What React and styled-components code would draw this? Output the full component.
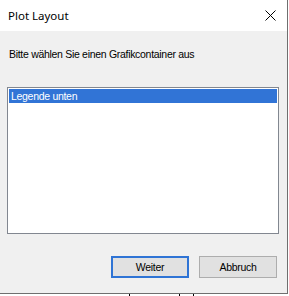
import React from "react";
import styled, {createGlobalStyle} from "styled-components";

const Global = createGlobalStyle`
  html, body {
    margin: 0;
    padding: 0;
    background: #ffffff;
  }
`;

const Window = styled.div`
  width: 287px;
  height: 293px;
  display: flex;
  flex-direction: column;
  background: #f0f0f0;
  border-right: 1px solid #6f6f6f;
  border-bottom: 1px solid #6f6f6f;
`;

const TitleBar = styled.div`
  height: 31px;
  flex-shrink: 0;
  background: #ffffff;
  display: flex;
  align-items: center;
  justify-content: space-between;
  padding-left: 8px;
  font-family: "Noto Sans", "Open Sans", sans-serif;
  font-size: 11.5px;
  color: #000000;
`;

const Close = styled.div`
  width: 33px;
  height: 31px;
  display: flex;
  align-items: center;
  justify-content: center;
`;

const Body = styled.div`
  flex: 1;
  display: flex;
  flex-direction: column;
  font-family: "Liberation Sans", Arial, sans-serif;
  font-size: 10.5px;
  letter-spacing: -0.3px;
  color: #000000;
`;

const Label = styled.div`
  margin: 17px 0 0 9px;
  line-height: 13px;
`;

const ListBox = styled.div`
  margin: 26px 0 0 7px;
  width: 272px;
  height: 147px;
  box-sizing: border-box;
  border: 1px solid #828790;
  background: #ffffff;
  padding: 1px;
`;

const Item = styled.div`
  height: 14px;
  line-height: 14px;
  padding-left: 2px;
  background: ${p => (p.selected ? "#3174d6" : "transparent")};
  color: ${p => (p.selected ? "#ffffff" : "#000000")};
`;

const ButtonRow = styled.div`
  margin-top: 22px;
  display: flex;
  justify-content: flex-end;
  gap: 10px;
  padding-right: 10px;
`;

const Button = styled.button`
  width: 78px;
  height: 22px;
  box-sizing: border-box;
  background: #e1e1e1;
  border: ${p => (p.primary ? "2px solid #2f74d5" : "1px solid #adadad")};
  font-family: "Liberation Sans", Arial, sans-serif;
  font-size: 10.5px;
  letter-spacing: -0.3px;
  color: #000000;
  padding: 0;
`;

const Desktop = styled.div`
  height: 2px;
  background:
    linear-gradient(#000, #000) 129px 0 / 1px 100% no-repeat,
    linear-gradient(#000, #000) 179px 0 / 1px 100% no-repeat,
    linear-gradient(#000, #000) 193px 0 / 1px 100% no-repeat,
    #ffffff;
`;

export default function App() {
  return (
    <>
      <Global />
      <Window>
        <TitleBar>
          <span>Plot Layout</span>
          <Close>
            <svg width="11" height="11" viewBox="0 0 11 11">
              <path d="M0.5 0.5 L10.5 10.5 M10.5 0.5 L0.5 10.5" stroke="#000" strokeWidth="1" fill="none" />
            </svg>
          </Close>
        </TitleBar>
        <Body>
          <Label>Bitte wählen Sie einen Grafikcontainer aus</Label>
          <ListBox>
            <Item selected>Legende unten</Item>
          </ListBox>
          <ButtonRow>
            <Button primary>Weiter</Button>
            <Button>Abbruch</Button>
          </ButtonRow>
        </Body>
      </Window>
      <Desktop />
    </>
  );
}
